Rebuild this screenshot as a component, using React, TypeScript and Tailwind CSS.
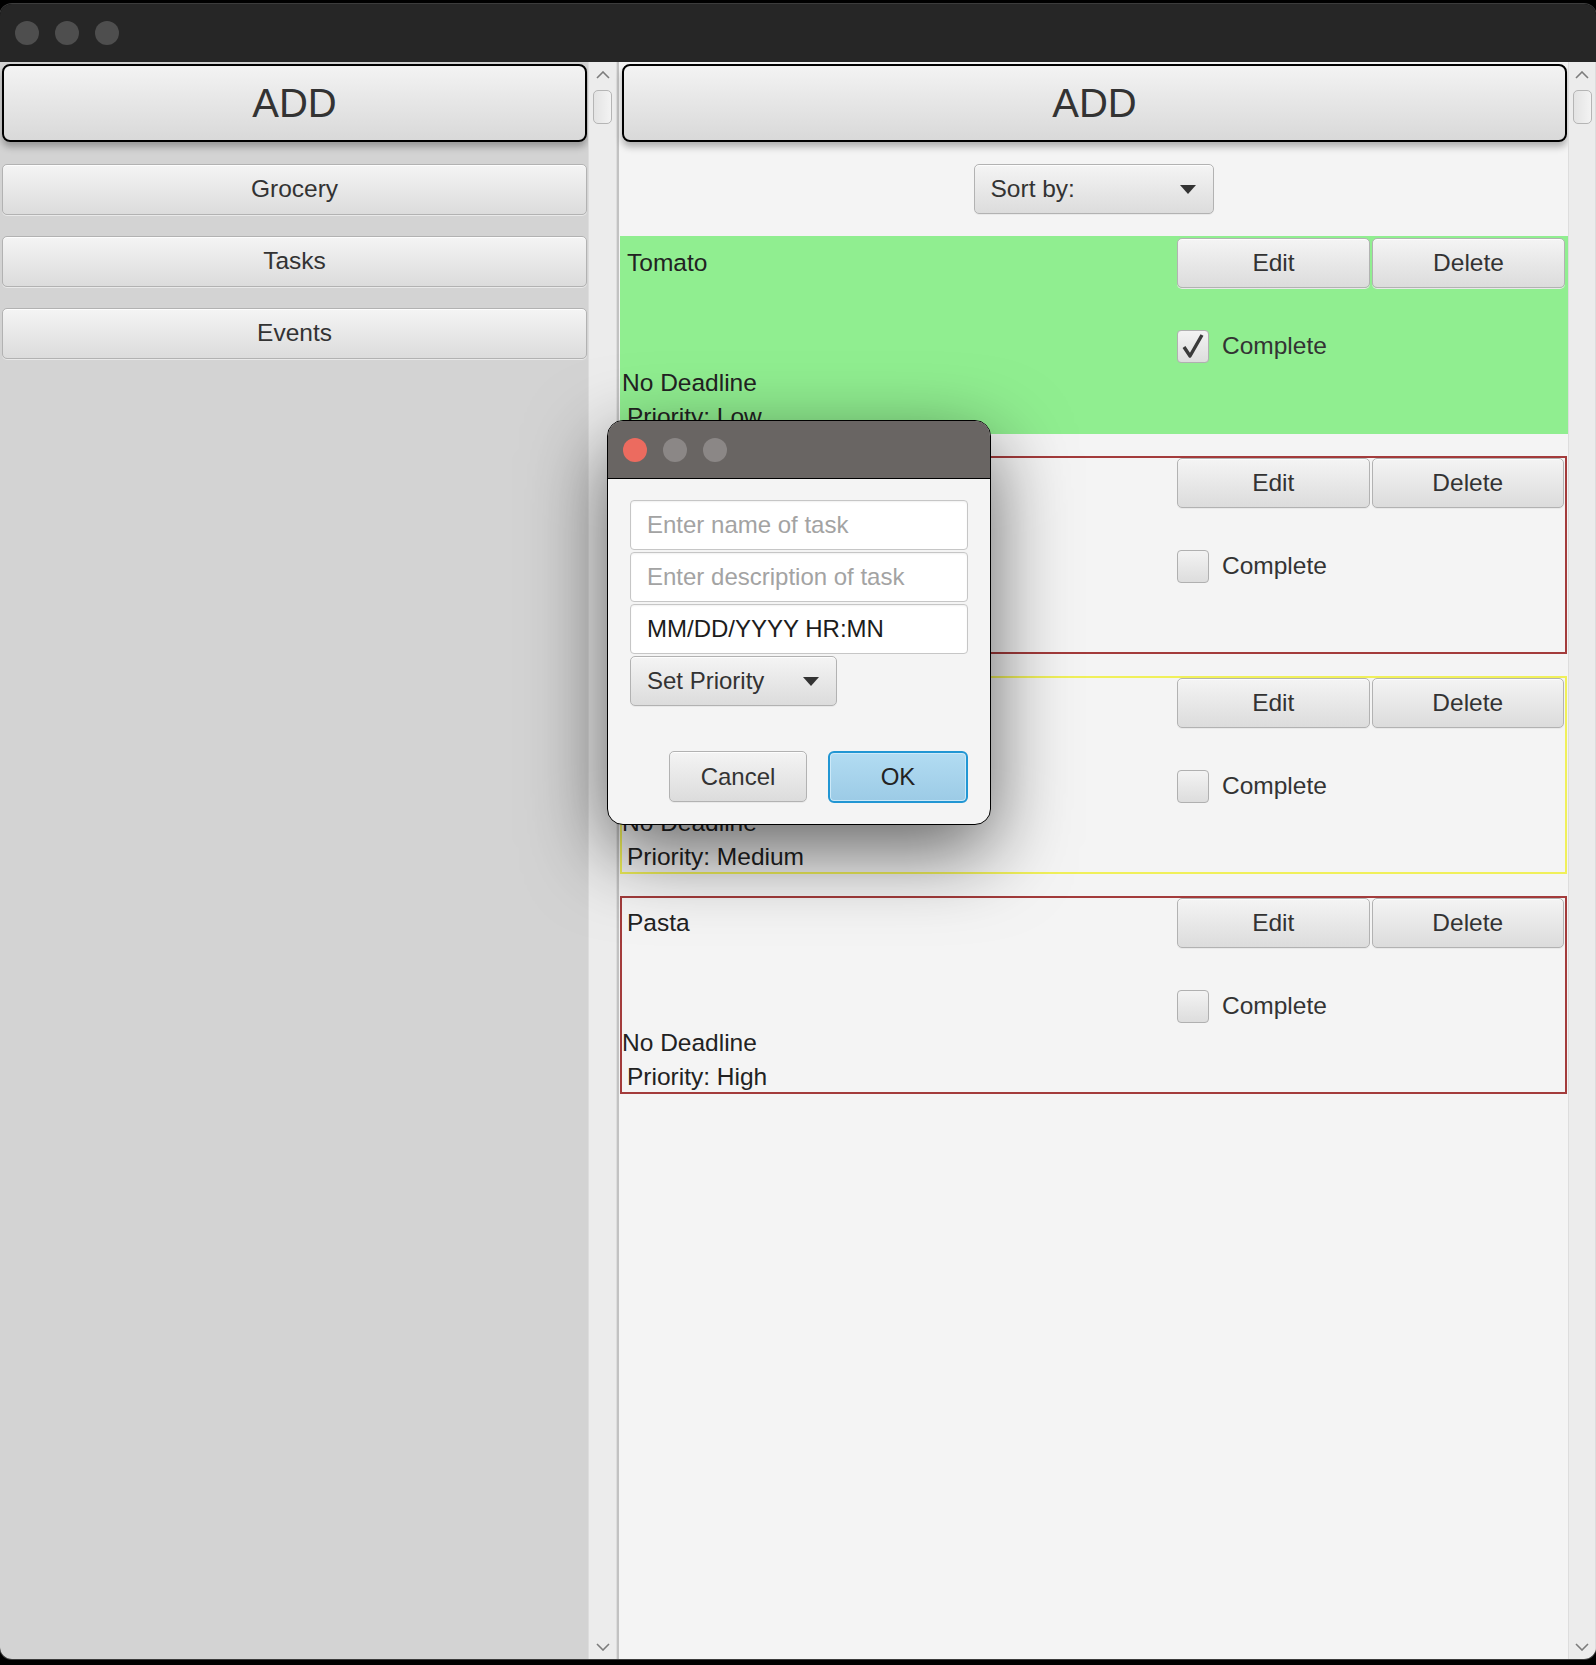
import React from "react";

const font = "font-['Liberation_Sans',Arial,sans-serif]";
const btn =
  "flex items-center justify-center rounded-[5px] border border-[#b2b2b2] bg-gradient-to-b from-[#f4f4f4] to-[#dcdcdc] text-[#333] shadow-[inset_0_1px_0_#fdfdfd,0_1px_0_#e9e9e9]";

const Chevron = ({ up }: { up?: boolean }) => (
  <svg width="14" height="8" viewBox="0 0 14 8">
    <polyline
      points={up ? "1,7 7,1 13,7" : "1,1 7,7 13,1"}
      fill="none"
      stroke="#7c7c7c"
      strokeWidth="1.6"
    />
  </svg>
);

const ScrollBar = ({ w }: { w: string }) => (
  <div className={`${w} h-full bg-[#ececec] border-x border-[#dddddd] flex flex-col items-center`}>
    <div className="mt-[9px] flex">
      <Chevron up />
    </div>
    <div className="mt-[11px] w-[19px] h-[34px] rounded-[5px] border border-[#b5b5b5] bg-gradient-to-r from-[#e3e3e3] to-[#f3f3f3]" />
    <div className="flex-1" />
    <div className="mb-[8px] flex">
      <Chevron />
    </div>
  </div>
);

const AddButton = () => (
  <div className="h-[78px] rounded-[8px] border-2 border-black bg-gradient-to-b from-[#f3f3f3] to-[#d9d9d9] shadow-[0_5px_7px_rgba(0,0,0,0.28)] flex items-center justify-center text-[40px] text-[#333]">
    ADD
  </div>
);

const CheckBox = ({ checked }: { checked?: boolean }) => (
  <div className="w-[32px] h-[33px] rounded-[4px] border border-[#b0b0b0] bg-gradient-to-b from-[#f3f3f3] to-[#dddddd] flex items-center justify-center">
    {checked && (
      <svg width="26" height="28" viewBox="0 0 26 28">
        <path d="M4 15 L10 24 L22 3" fill="none" stroke="#3a3a3a" strokeWidth="3.4" strokeLinejoin="round" />
      </svg>
    )}
  </div>
);

type RowProps = {
  name?: string;
  deadline?: string;
  priority?: string;
  checked?: boolean;
  cls: string;
};

const Row = ({ name, deadline, priority, checked, cls }: RowProps) => (
  <div className={`h-[198px] border-2 grid grid-cols-[555px_1fr] ${cls}`}>
    <div className="flex flex-col text-[24.5px] leading-[30px] text-[#222]">
      <div className="mt-[10px] pl-[5px] h-[30px]">{name}</div>
      <div className="flex-1" />
      <div className="h-[30px]">{deadline}</div>
      <div className="mt-[4px] pl-[5px] h-[30px]">{priority}</div>
    </div>
    <div className="flex flex-col">
      <div className="flex gap-[2px] h-[50px] pr-[1px] text-[24.5px]">
        <div className={`${btn} flex-1`}>Edit</div>
        <div className={`${btn} flex-1`}>Delete</div>
      </div>
      <div className="mt-[40px] flex items-center gap-[13px]">
        <CheckBox checked={checked} />
        <span className="text-[24.5px] text-[#333]">Complete</span>
      </div>
    </div>
  </div>
);

const Light = ({ c }: { c: string }) => <div className={`w-[24px] h-[24px] rounded-full ${c}`} />;

const Dialog = () => (
  <div className="absolute left-[607px] top-[420px] w-[384px] rounded-[16px] border border-black overflow-hidden bg-[#f4f4f4] shadow-[0_26px_80px_rgba(0,0,0,0.6)]">
    <div className="h-[58px] bg-[#696563] border-b border-black flex items-center gap-[16px] pl-[15px]">
      <Light c="bg-[#ec6b5f]" />
      <Light c="bg-[#8b8786]" />
      <Light c="bg-[#8b8786]" />
    </div>
    <div className="px-[22px] pt-[21px] pb-[21px] flex flex-col text-[24px]">
      <div className="flex flex-col gap-[2px]">
        <div className="h-[50px] rounded-[4px] border border-[#c6c6c6] bg-white shadow-[inset_0_1px_2px_rgba(0,0,0,0.06)] flex items-center pl-[16px] text-[#a3a3a3]">
          Enter name of task
        </div>
        <div className="h-[50px] rounded-[4px] border border-[#c6c6c6] bg-white shadow-[inset_0_1px_2px_rgba(0,0,0,0.06)] flex items-center pl-[16px] text-[#a3a3a3]">
          Enter description of task
        </div>
        <div className="h-[50px] rounded-[4px] border border-[#c6c6c6] bg-white shadow-[inset_0_1px_2px_rgba(0,0,0,0.06)] flex items-center pl-[16px] text-[#1c1c1c]">
          MM/DD/YYYY HR:MN
        </div>
        <div className={`${btn} !justify-between w-[207px] h-[50px] pl-[16px] pr-[17px]`}>
          <span>Set Priority</span>
          <svg width="16" height="9" viewBox="0 0 16 9">
            <path d="M0 0 H16 L8 9 Z" fill="#333" />
          </svg>
        </div>
      </div>
      <div className="mt-[45px] flex justify-end gap-[21px]">
        <div className={`${btn} w-[138px] h-[51px]`}>Cancel</div>
        <div className="w-[140px] h-[52px] rounded-[6px] border-2 border-[#2196d3] bg-gradient-to-b from-[#b2dcf2] to-[#9ccbe6] shadow-[inset_0_0_0_1px_#cde9f8] flex items-center justify-center text-[#222]">
          OK
        </div>
      </div>
    </div>
  </div>
);

export default function App() {
  return (
    <div className={`relative w-[1596px] h-[1665px] bg-black pt-[4px] ${font}`}>
      <div className="h-[1655px] rounded-[12px] overflow-hidden flex flex-col shadow-[0_0_0_1px_#3c3c3c]">
        <div className="h-[58px] bg-[#262626] flex items-center gap-[16px] pl-[15px]">
          <Light c="bg-[#4e4e4e]" />
          <Light c="bg-[#4e4e4e]" />
          <Light c="bg-[#4e4e4e]" />
        </div>
        <div className="flex-1 flex">
          <div className="w-[588px] bg-[#d3d3d3] pl-[2px] pr-[1px] pt-[2px] flex flex-col gap-[22px]">
            <AddButton />
            <div className={`${btn} h-[51px] text-[24.5px]`}>Grocery</div>
            <div className={`${btn} h-[51px] text-[24.5px] -mt-[1px]`}>Tasks</div>
            <div className={`${btn} h-[51px] text-[24.5px] -mt-[1px]`}>Events</div>
          </div>
          <ScrollBar w="w-[29px]" />
          <div className="w-[951px] border-l-2 border-[#c2c2c2] bg-[#f4f4f4] pt-[2px] flex flex-col gap-[22px]">
            <div className="ml-[3px] mr-[1px]">
              <AddButton />
            </div>
            <div className={`${btn} !justify-start self-center w-[240px] h-[50px] pl-[16px] pr-[17px] text-[24.5px]`}>
              <span className="flex-1">Sort by:</span>
              <svg width="16" height="9" viewBox="0 0 16 9">
                <path d="M0 0 H16 L8 9 Z" fill="#333" />
              </svg>
            </div>
            <div className="ml-[1px] flex flex-col gap-[22px]">
              <Row
                name="Tomato"
                deadline="No Deadline"
                priority="Priority: Low"
                checked
                cls="bg-[#90ee90] border-transparent"
              />
              <Row cls="border-[#a33b3b] mr-[1px]" />
              <Row deadline="No Deadline" priority="Priority: Medium" cls="border-[#f0f05a] mr-[1px]" />
              <Row name="Pasta" deadline="No Deadline" priority="Priority: High" cls="border-[#a33b3b] mr-[1px]" />
            </div>
          </div>
          <ScrollBar w="w-[28px]" />
        </div>
      </div>
      <Dialog />
    </div>
  );
}
